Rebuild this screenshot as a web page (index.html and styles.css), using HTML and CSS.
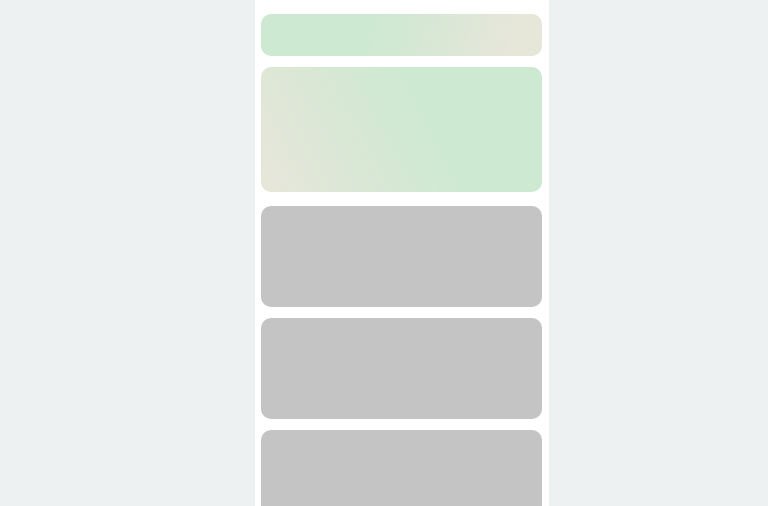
FILE: index.html
```html
<!DOCTYPE html>
<html>
<head>
<meta charset="utf-8">
<link rel="stylesheet" href="styles.css">
</head>
<body>
<main class="column">
  <div class="card banner"></div>
  <div class="card hero"></div>
  <div class="list">
    <div class="card item"></div>
    <div class="card item"></div>
    <div class="card item"></div>
  </div>
</main>
</body>
</html>
```
FILE: styles.css
```css
html, body {
  margin: 0;
  height: 100%;
  overflow: hidden;
  background: #edf1f2;
  font-family: "Liberation Sans", Arial, sans-serif;
}
.column {
  width: 294px;
  margin-left: calc(50% - 129px);
  min-height: 100%;
  background: #ffffff;
  box-sizing: border-box;
  padding: 14px 7px 0 6px;
  display: flex;
  flex-direction: column;
}
.card {
  border-radius: 10px;
  flex-shrink: 0;
}
.banner {
  height: 42px;
  background: linear-gradient(105deg, #cde9d2 38%, #e6e6d9 88%);
}
.hero {
  margin-top: 11px;
  height: 125px;
  background: linear-gradient(62deg, #e6e6d9 4%, #cde9d2 60%);
}
.list {
  margin-top: 14px;
  display: flex;
  flex-direction: column;
  gap: 11px;
}
.item {
  height: 101px;
  background: #c4c4c4;
}
```
